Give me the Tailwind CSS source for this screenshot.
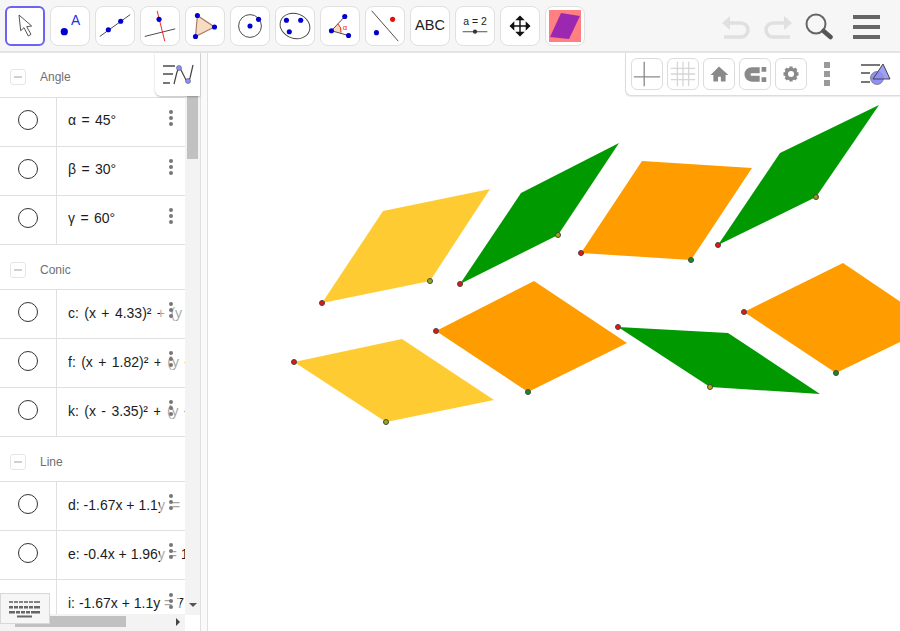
<!DOCTYPE html>
<html lang="en">
<head>
  <meta charset="UTF-8">
  <title>GeoGebra</title>
  <script src="https://cdn.jsdelivr.net/npm/@tailwindcss/browser@4"></script>
</head>
<body class="bg-white">
<div class="w-[900px] h-[631px] overflow-hidden flex flex-col font-['Liberation_Sans',sans-serif]">

  <!-- toolbar -->
  <div class="h-[53px] shrink-0 bg-[#f6f6f6] border-b-2 border-[#e4e4e4] flex gap-[5px] pl-[5px] pt-[6px]">
    <button class="w-10 h-10 bg-white rounded-md border-2 border-[#6c63f0] overflow-hidden">
      <svg viewBox="0 0 40 40" class="w-10 h-10 -m-[2px]"><path d="M14 9 15.700 24.700 19 21.700 23.300 30 26 28.300 21.700 20.700 26.700 20z" fill="#fff" stroke="#555" stroke-width="1" stroke-linejoin="round"/></svg>
    </button>
    <button class="w-10 h-10 bg-white rounded-lg border border-[#e0e0e0]">
      <svg viewBox="0 0 40 40" class="w-full h-full"><circle cx="14" cy="26" r="3.800" fill="#0000d0"/><text x="21" y="19" font-size="14.500" fill="#2030e0" font-family="Liberation Sans">A</text></svg>
    </button>
    <button class="w-10 h-10 bg-white rounded-lg border border-[#e0e0e0]">
      <svg viewBox="0 0 40 40" class="w-full h-full"><path d="M4 31 36 8" stroke="#444" stroke-width="1"/><circle cx="13" cy="24" r="2.700" fill="#0000d0"/><circle cx="26" cy="15" r="2.700" fill="#0000d0"/></svg>
    </button>
    <button class="w-10 h-10 bg-white rounded-lg border border-[#e0e0e0]">
      <svg viewBox="0 0 40 40" class="w-full h-full"><path d="M4 31 36 23" stroke="#444" stroke-width="1"/><path d="M17 4 25 36" stroke="#f02020" stroke-width="1"/><circle cx="19" cy="13" r="2.700" fill="#0000d0"/></svg>
    </button>
    <button class="w-10 h-10 bg-white rounded-lg border border-[#e0e0e0]">
      <svg viewBox="0 0 40 40" class="w-full h-full"><path d="M12 9 30 21 10 31z" fill="#f6dcc2" stroke="#a8765c" stroke-width="1.200"/><circle cx="12" cy="9" r="2.700" fill="#0000d0"/><circle cx="30" cy="21" r="2.700" fill="#0000d0"/><circle cx="10" cy="31" r="2.700" fill="#0000d0"/></svg>
    </button>
    <button class="w-10 h-10 bg-white rounded-lg border border-[#e0e0e0]">
      <svg viewBox="0 0 40 40" class="w-full h-full"><circle cx="20" cy="20" r="12" fill="none" stroke="#444" stroke-width="1"/><circle cx="20" cy="20" r="2.700" fill="#0000d0"/><circle cx="29" cy="13" r="2.700" fill="#0000d0"/></svg>
    </button>
    <button class="w-10 h-10 bg-white rounded-lg border border-[#e0e0e0]">
      <svg viewBox="0 0 40 40" class="w-full h-full"><ellipse cx="20" cy="20" rx="16" ry="13" fill="none" stroke="#444" stroke-width="1" transform="rotate(20 20 20)"/><circle cx="11" cy="14" r="2.700" fill="#0000d0"/><circle cx="14" cy="26" r="2.700" fill="#0000d0"/><circle cx="26" cy="14" r="2.700" fill="#0000d0"/></svg>
    </button>
    <button class="w-10 h-10 bg-white rounded-lg border border-[#e0e0e0]">
      <svg viewBox="0 0 40 40" class="w-full h-full"><path d="M11 25 18 18A10 10 0 0 1 21 27z" fill="#f6dcc2"/><path d="M18 18A10 10 0 0 1 21 27" fill="none" stroke="#f02020"/><path d="M25 10 11 25 29 30" fill="none" stroke="#444"/><circle cx="25" cy="10" r="2.700" fill="#0000d0"/><circle cx="11" cy="25" r="2.700" fill="#0000d0"/><circle cx="29" cy="30" r="2.700" fill="#0000d0"/><text x="23" y="24" font-size="8" fill="#f02020" font-family="Liberation Sans">α</text></svg>
    </button>
    <button class="w-10 h-10 bg-white rounded-lg border border-[#e0e0e0]">
      <svg viewBox="0 0 40 40" class="w-full h-full"><path d="M6 4 34 36" stroke="#444"/><circle cx="28" cy="13" r="2.700" fill="#e01010"/><circle cx="11" cy="27" r="2.700" fill="#0000d0"/></svg>
    </button>
    <button class="w-10 h-10 bg-white rounded-lg border border-[#e0e0e0] text-[14.500px] text-[#222]">ABC</button>
    <button class="w-10 h-10 bg-white rounded-lg border border-[#e0e0e0]">
      <svg viewBox="0 0 40 40" class="w-full h-full"><text x="20" y="19" text-anchor="middle" font-size="11" fill="#222" font-family="Liberation Sans">a = 2</text><path d="M7 26H33" stroke="#666" stroke-width="1.200"/><circle cx="20" cy="26" r="2.200" fill="#333"/></svg>
    </button>
    <button class="w-10 h-10 bg-white rounded-lg border border-[#e0e0e0]">
      <svg viewBox="0 0 40 40" class="w-full h-full" fill="#111"><path d="M20 10v20M10 20h20" stroke="#111" stroke-width="1.500"/><path d="M20 9l-5 5h10zM20 31l-5-5h10zM9 20l5-5v10zM31 20l-5-5v10z"/></svg>
    </button>
    <button class="w-10 h-10 bg-white rounded-lg border border-[#e0e0e0] flex items-center justify-center">
      <svg viewBox="0 0 32 32" class="w-8 h-8"><rect width="32" height="32" fill="#ff8080"/><path d="M12 3 31 6 20 29 1 27z" fill="#9c27b0"/></svg>
    </button>

    <div class="ml-auto flex pr-[20px] -mt-[6px]">
      <svg viewBox="0 0 72 52" class="w-[72px] h-[52px] mr-[8px]" fill="none" stroke="#e0e0e0" stroke-width="3.500">
        <path d="M8 23H20a7 7 0 0 1 0 14H3"/><path d="M1 23 9 16v14z" fill="#e0e0e0" stroke="none"/>
        <path d="M64 23H52a7 7 0 0 0 0 14H69"/><path d="M71 23 63 16v14z" fill="#e0e0e0" stroke="none"/>
      </svg>
      <svg viewBox="0 0 32 52" class="w-8 h-[52px] mr-[20px]" fill="none"><circle cx="15" cy="24" r="9.500" stroke="#666" stroke-width="2"/><path d="M22.500 31 29.500 37" stroke="#555" stroke-width="4.500" stroke-linecap="round"/></svg>
      <div class="w-[27px] pt-[15px] flex flex-col gap-[6px]">
        <div class="h-[4px] bg-[#666]"></div>
        <div class="h-[4px] bg-[#666]"></div>
        <div class="h-[4px] bg-[#666]"></div>
      </div>
    </div>
  </div>

  <div class="flex-1 flex min-h-0">
    <!-- algebra view -->
    <div class="w-[201px] shrink-0 relative border-r border-[#e0e0e0] flex">
      <div class="w-[185px] overflow-hidden text-[14px] text-[#1c1c1c]">

        <div class="h-[45px] border-b border-[#e0e0e0] flex items-center pl-[10px] pt-[3px]">
          <span class="w-4 h-4 border border-[#e6e6e6] rounded-[3px] flex items-center justify-center mr-[14px]"><span class="w-2 h-[2px] bg-[#d0d0d0]"></span></span>
          <span class="text-[12px] text-[#6f6f6f]">Angle</span>
        </div>
        <div class="relative h-[49px] border-b border-[#e0e0e0] flex">
          <div class="w-[57px] shrink-0 border-r border-[#e0e0e0] flex items-center justify-center pb-[4px]"><span class="w-5 h-5 rounded-full border border-[#333]"></span></div>
          <div class="pl-[11px] pb-[4px] flex items-center whitespace-nowrap [word-spacing:1.500px]">α = 45°</div>
          <div class="absolute left-[160px] w-[22px] h-full flex flex-col items-center justify-center gap-[2px] pb-[8px]"><i class="w-1 h-1 rounded-full bg-[#777]"></i><i class="w-1 h-1 rounded-full bg-[#777]"></i><i class="w-1 h-1 rounded-full bg-[#777]"></i></div>
        </div>
        <div class="relative h-[49px] border-b border-[#e0e0e0] flex">
          <div class="w-[57px] shrink-0 border-r border-[#e0e0e0] flex items-center justify-center pb-[4px]"><span class="w-5 h-5 rounded-full border border-[#333]"></span></div>
          <div class="pl-[11px] pb-[4px] flex items-center whitespace-nowrap [word-spacing:1.500px]">β = 30°</div>
          <div class="absolute left-[160px] w-[22px] h-full flex flex-col items-center justify-center gap-[2px] pb-[8px]"><i class="w-1 h-1 rounded-full bg-[#777]"></i><i class="w-1 h-1 rounded-full bg-[#777]"></i><i class="w-1 h-1 rounded-full bg-[#777]"></i></div>
        </div>
        <div class="relative h-[49px] border-b border-[#e0e0e0] flex">
          <div class="w-[57px] shrink-0 border-r border-[#e0e0e0] flex items-center justify-center pb-[4px]"><span class="w-5 h-5 rounded-full border border-[#333]"></span></div>
          <div class="pl-[11px] pb-[4px] flex items-center whitespace-nowrap [word-spacing:1.500px]">γ = 60°</div>
          <div class="absolute left-[160px] w-[22px] h-full flex flex-col items-center justify-center gap-[2px] pb-[8px]"><i class="w-1 h-1 rounded-full bg-[#777]"></i><i class="w-1 h-1 rounded-full bg-[#777]"></i><i class="w-1 h-1 rounded-full bg-[#777]"></i></div>
        </div>

        <div class="h-[45px] border-b border-[#e0e0e0] flex items-center pl-[10px] pt-[5px]">
          <span class="w-4 h-4 border border-[#e6e6e6] rounded-[3px] flex items-center justify-center mr-[14px]"><span class="w-2 h-[2px] bg-[#d0d0d0]"></span></span>
          <span class="text-[12px] text-[#6f6f6f]">Conic</span>
        </div>
        <div class="relative h-[49px] border-b border-[#e0e0e0] flex">
          <div class="w-[57px] shrink-0 border-r border-[#e0e0e0] flex items-center justify-center pb-[4px]"><span class="w-5 h-5 rounded-full border border-[#333]"></span></div>
          <div class="pl-[11px] pb-[2px] flex items-center whitespace-nowrap [word-spacing:1.500px]">c: (x + 4.33)² + (y</div>
          <div class="absolute left-[160px] w-[22px] h-full bg-white/60 flex flex-col items-center justify-center gap-[2px] pb-[8px]"><i class="w-1 h-1 rounded-full bg-[#777]"></i><i class="w-1 h-1 rounded-full bg-[#777]"></i><i class="w-1 h-1 rounded-full bg-[#777]"></i></div>
        </div>
        <div class="relative h-[49px] border-b border-[#e0e0e0] flex">
          <div class="w-[57px] shrink-0 border-r border-[#e0e0e0] flex items-center justify-center pb-[4px]"><span class="w-5 h-5 rounded-full border border-[#333]"></span></div>
          <div class="pl-[11px] pb-[2px] flex items-center whitespace-nowrap [word-spacing:1.500px]">f: (x + 1.82)² + (y -</div>
          <div class="absolute left-[160px] w-[22px] h-full bg-white/60 flex flex-col items-center justify-center gap-[2px] pb-[8px]"><i class="w-1 h-1 rounded-full bg-[#777]"></i><i class="w-1 h-1 rounded-full bg-[#777]"></i><i class="w-1 h-1 rounded-full bg-[#777]"></i></div>
        </div>
        <div class="relative h-[49px] border-b border-[#e0e0e0] flex">
          <div class="w-[57px] shrink-0 border-r border-[#e0e0e0] flex items-center justify-center pb-[4px]"><span class="w-5 h-5 rounded-full border border-[#333]"></span></div>
          <div class="pl-[11px] pb-[2px] flex items-center whitespace-nowrap [word-spacing:1.500px]">k: (x - 3.35)² + (y -</div>
          <div class="absolute left-[160px] w-[22px] h-full bg-white/60 flex flex-col items-center justify-center gap-[2px] pb-[8px]"><i class="w-1 h-1 rounded-full bg-[#777]"></i><i class="w-1 h-1 rounded-full bg-[#777]"></i><i class="w-1 h-1 rounded-full bg-[#777]"></i></div>
        </div>

        <div class="h-[45px] border-b border-[#e0e0e0] flex items-center pl-[10px] pt-[5px]">
          <span class="w-4 h-4 border border-[#e6e6e6] rounded-[3px] flex items-center justify-center mr-[14px]"><span class="w-2 h-[2px] bg-[#d0d0d0]"></span></span>
          <span class="text-[12px] text-[#6f6f6f]">Line</span>
        </div>
        <div class="relative h-[49px] border-b border-[#e0e0e0] flex">
          <div class="w-[57px] shrink-0 border-r border-[#e0e0e0] flex items-center justify-center pb-[4px]"><span class="w-5 h-5 rounded-full border border-[#333]"></span></div>
          <div class="pl-[11px] pb-[2px] flex items-center whitespace-nowrap">d: -1.67x + 1.1y<span class="ml-[7px]">=</span></div>
          <div class="absolute left-[160px] w-[22px] h-full bg-white/60 flex flex-col items-center justify-center gap-[2px] pb-[8px]"><i class="w-1 h-1 rounded-full bg-[#777]"></i><i class="w-1 h-1 rounded-full bg-[#777]"></i><i class="w-1 h-1 rounded-full bg-[#777]"></i></div>
        </div>
        <div class="relative h-[49px] border-b border-[#e0e0e0] flex">
          <div class="w-[57px] shrink-0 border-r border-[#e0e0e0] flex items-center justify-center pb-[4px]"><span class="w-5 h-5 rounded-full border border-[#333]"></span></div>
          <div class="pl-[11px] pb-[2px] flex items-center whitespace-nowrap">e: -0.4x + 1.96y = 1</div>
          <div class="absolute left-[160px] w-[22px] h-full bg-white/60 flex flex-col items-center justify-center gap-[2px] pb-[8px]"><i class="w-1 h-1 rounded-full bg-[#777]"></i><i class="w-1 h-1 rounded-full bg-[#777]"></i><i class="w-1 h-1 rounded-full bg-[#777]"></i></div>
        </div>
        <div class="relative h-[49px] flex">
          <div class="w-[57px] shrink-0 border-r border-[#e0e0e0] flex items-center justify-center pb-[4px]"><span class="w-5 h-5 rounded-full border border-[#333]"></span></div>
          <div class="pl-[11px] pb-[2px] flex items-center whitespace-nowrap">i: -1.67x + 1.1y = 7</div>
          <div class="absolute left-[162px] w-[18px] h-full bg-white/60 flex flex-col items-center justify-center gap-[2px] pb-[8px]"><i class="w-1 h-1 rounded-full bg-[#777]"></i><i class="w-1 h-1 rounded-full bg-[#777]"></i><i class="w-1 h-1 rounded-full bg-[#777]"></i></div>
        </div>
      </div>

      <!-- vertical scrollbar -->
      <div class="w-[15px] h-[562px] bg-[#f3f3f3] relative">
        <div class="absolute left-[2px] top-0 w-[11px] h-[106px] bg-[#c1c1c1]"></div>
        <div class="absolute left-[4px] bottom-[8px] w-0 h-0 border-x-[4px] border-x-transparent border-t-[4px] border-t-[#555]"></div>
      </div>

      <!-- horizontal scrollbar -->
      <div class="absolute left-0 bottom-0 w-[185px] h-[17px] bg-[#f3f3f3]">
        <div class="absolute left-[15px] top-[2px] w-[111px] h-[11px] bg-[#c1c1c1]"></div>
        <div class="absolute left-[176px] top-[4px] w-0 h-0 border-y-[4px] border-y-transparent border-l-[4px] border-l-[#444]"></div>
      </div>

      <!-- algebra style button -->
      <div class="absolute left-[155px] top-0 w-[45px] h-[43px] bg-white rounded-bl-md shadow-[0_1px_2px_rgba(0,0,0,0.25)] flex items-center justify-center">
        <svg viewBox="0 0 36 28" class="w-9 h-7">
          <path d="M3 5H15M3 13H13M3 22H10" stroke="#777" stroke-width="2" fill="none"/>
          <path d="M14 23 17 11Q19 5 21 9L26 19Q28 22 30 17L33 4" stroke="#444" stroke-width="1.200" fill="none"/>
          <circle cx="19" cy="7" r="2.500" fill="#8f8ff5" stroke="#444" stroke-width=".5"/><circle cx="28" cy="20" r="2.500" fill="#8f8ff5" stroke="#444" stroke-width=".5"/>
        </svg>
      </div>

      <!-- keyboard button -->
      <div class="absolute left-0 top-[540px] w-[50px] h-[31px] bg-[#f6f6f6] border border-[#d8d8d8] flex items-center justify-center">
        <svg viewBox="0 0 34 20" class="w-[34px] h-5" fill="#666">
          <path d="M1 2h4v2H1zM6 2h4v2H6zM11 2h4v2h-4zM16 2h4v2h-4zM21 2h4v2h-4zM26 2h6v2h-6z" opacity=".8"/>
          <path d="M1 7h4v2.500H1zM6 7h4v2.500H6zM11 7h4v2.500h-4zM16 7h4v2.500h-4zM21 7h4v2.500h-4zM26 7h6v2.500h-6z"/>
          <path d="M1 12h6v2.500H1zM8 12h4v2.500H8zM13 12h4v2.500h-4zM18 12h4v2.500h-4zM23 12h9v2.500h-9z"/>
          <path d="M9 16.500h15v2H9z"/>
        </svg>
      </div>
    </div>

    <!-- splitter -->
    <div class="w-[7px] shrink-0 border-r border-[#e0e0e0] bg-[#fafafa]"></div>

    <!-- graphics view -->
    <div class="flex-1 relative overflow-hidden bg-white">
      <svg class="absolute -left-[208px] -top-[53px] w-[900px] h-[631px]" viewBox="0 0 900 631">
        <path d="M322 303 430 281 490 189 383 211z" fill="#ffcb32"/>
        <path d="M294 362 402 339 494 400 386 422z" fill="#ffcb32"/>
        <path d="M460 284 558 235 619 143 521 193z" fill="#009900"/>
        <path d="M718 245 816 197 879 105 780 153z" fill="#009900"/>
        <path d="M618 327 728 333 820 394 710 387z" fill="#009900"/>
        <path d="M581 253 691 260 752 168 642 161z" fill="#ff9c00"/>
        <path d="M436 331 534 281 627 343 528 392z" fill="#ff9c00"/>
        <path d="M744 312 843 263 935 325 836 373z" fill="#ff9c00"/>
        <g stroke="#444" stroke-width="1" fill="#f01010">
          <circle cx="322" cy="303" r="2.500"/><circle cx="294" cy="362" r="2.500"/><circle cx="460" cy="284" r="2.500"/><circle cx="436" cy="331" r="2.500"/>
          <circle cx="581" cy="253" r="2.500"/><circle cx="618" cy="327" r="2.500"/><circle cx="718" cy="245" r="2.500"/><circle cx="744" cy="312" r="2.500"/>
        </g>
        <g stroke="#444" stroke-width="1">
          <circle cx="430" cy="281" r="2.500" fill="#90b010"/><circle cx="386" cy="422" r="2.500" fill="#90b010"/><circle cx="558" cy="235" r="2.500" fill="#90b010"/><circle cx="710" cy="387" r="2.500" fill="#b0b010"/>
          <circle cx="816" cy="197" r="2.500" fill="#a09a10"/><circle cx="691" cy="260" r="2.500" fill="#109020"/><circle cx="528" cy="392" r="2.500" fill="#109020"/><circle cx="836" cy="373" r="2.500" fill="#109020"/>
        </g>
      </svg>

      <!-- graphics style bar -->
      <div class="absolute right-0 top-0 w-[275px] h-[43px] bg-white border-l border-b border-[#dcdcdc] rounded-bl-md flex items-start gap-1 pl-[5px] pt-[5px] shadow-[0_1px_1px_rgba(0,0,0,0.08)]">
        <div class="w-8 h-8 rounded-md border border-[#dcdcdc]">
          <svg viewBox="0 0 32 32" class="w-full h-full"><path d="M13 3V29M2 19H30" stroke="#8a8a8a" stroke-width="1.400"/></svg>
        </div>
        <div class="w-8 h-8 rounded-md border border-[#dcdcdc]">
          <svg viewBox="0 0 32 32" class="w-full h-full"><path d="M10 3V29M16 3V29M22 3V29M3 10H29M3 16H29M3 22H29" stroke="#d6d6d6" stroke-width="1.400"/></svg>
        </div>
        <div class="w-8 h-8 rounded-md border border-[#dcdcdc]">
          <svg viewBox="0 0 32 32" class="w-full h-full"><path d="M16 8 7 17h3v7h5v-5h3v5h5v-7h3z" fill="#8a8a8a"/></svg>
        </div>
        <div class="w-8 h-8 rounded-md border border-[#dcdcdc]">
          <svg viewBox="0 0 32 32" class="w-full h-full"><path d="M21 12H12.500a4 4 0 0 0 0 9H21" stroke="#8a8a8a" stroke-width="6.500" fill="none"/><path d="M23 8.500h5v5h-5zM23 19.500h5v5h-5z" fill="#8a8a8a"/></svg>
        </div>
        <div class="w-8 h-8 rounded-md border border-[#dcdcdc]">
          <svg viewBox="0 0 32 32" class="w-full h-full"><circle cx="16" cy="16" r="5" fill="none" stroke="#8a8a8a" stroke-width="3.500"/><path d="M16 8v3M16 21v3M8 16h3M21 16h3M10.300 10.300l2 2M19.700 19.700l2 2M10.300 21.700l2-2M19.700 12.300l2-2" stroke="#8a8a8a" stroke-width="3.500"/></svg>
        </div>
        <div class="ml-[13px] mt-[4px] w-[6px] flex flex-col gap-[3px]">
          <div class="h-[6px] bg-[#9a9a9a]"></div>
          <div class="h-[6px] bg-[#9a9a9a]"></div>
          <div class="h-[6px] bg-[#9a9a9a]"></div>
        </div>
        <svg viewBox="0 0 36 28" class="w-9 h-7 ml-[24px] mt-[2px]">
          <path d="M3 5H22M3 13H12M3 22H12" stroke="#777" stroke-width="2" fill="none"/>
          <circle cx="19" cy="18" r="6.500" fill="#8f8ff5" stroke="#555" stroke-width=".6"/>
          <path d="M25 4 15 19H32z" fill="#8f8ff5" fill-opacity=".85" stroke="#444" stroke-width="1"/>
        </svg>
      </div>
    </div>
  </div>
</div>
</body>
</html>
